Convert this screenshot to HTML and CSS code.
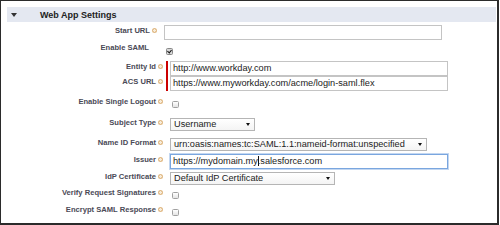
FILE: index.html
```
<!DOCTYPE html>
<html lang="en">

<head>
    <meta charset="UTF-8">
    <title>Web App Settings</title>
    <link rel="stylesheet" href="styles.css">
</head>

<body>
    <div class="frame">
        <div class="sec-head">
            <span class="twist"></span>
            <h3>Web App Settings</h3>
        </div>
        <ul class="form">
            <li class="row shift">
                <label>Start URL<i class="help"></i></label>
                <div class="field"><span class="input"></span></div>
            </li>
            <li class="row shift">
                <label class="nohelp">Enable SAML</label>
                <div class="field"><span class="check on"></span></div>
            </li>
            <li class="row">
                <label>Entity Id<i class="help"></i></label>
                <div class="field req"><span class="input">http://www.workday.com</span></div>
            </li>
            <li class="row">
                <label>ACS URL<i class="help"></i></label>
                <div class="field req"><span class="input">https://www.myworkday.com/acme/login-saml.flex</span></div>
            </li>
            <li class="row">
                <label>Enable Single Logout<i class="help"></i></label>
                <div class="field"><span class="check"></span></div>
            </li>
            <li class="row">
                <label>Subject Type<i class="help"></i></label>
                <div class="field"><span class="select s-user">Username<b></b></span></div>
            </li>
            <li class="row">
                <label>Name ID Format<i class="help"></i></label>
                <div class="field"><span class="select s-name">urn:oasis:names:tc:SAML:1.1:nameid-format:unspecified<b></b></span></div>
            </li>
            <li class="row">
                <label>Issuer<i class="help"></i></label>
                <div class="field"><span class="input focus">https://mydomain.my<em class="caret"></em>.salesforce.com</span></div>
            </li>
            <li class="row">
                <label>IdP Certificate<i class="help"></i></label>
                <div class="field"><span class="select s-cert">Default IdP Certificate<b></b></span></div>
            </li>
            <li class="row">
                <label>Verify Request Signatures<i class="help"></i></label>
                <div class="field"><span class="check"></span></div>
            </li>
            <li class="row">
                <label>Encrypt SAML Response<i class="help"></i></label>
                <div class="field"><span class="check"></span></div>
            </li>
        </ul>
    </div>
</body>

</html>
```

FILE: styles.css
```
* {
    margin: 0;
    padding: 0;
    box-sizing: border-box;
}

ul li {
    list-style: none;
}

body {
    background-color: #fff;
    font-family: "Liberation Sans", Arial, sans-serif;
}

.frame {
    width: 499px;
    height: 225px;
    padding-top: 6px;
    border: solid #2b2b2b;
    border-width: 1px 2px 2px 1px;
    overflow: hidden;
}

.sec-head {
    display: flex;
    align-items: center;
    height: 15px;
    margin: 0 1px 0 6px;
    padding-left: 4px;
    background-color: #e4e8f1;
}

.twist {
    width: 0;
    height: 0;
    margin-right: 23px;
    border-left: 3px solid transparent;
    border-right: 3px solid transparent;
    border-top: 4px solid #333;
}

.sec-head h3 {
    font-size: 9px;
    font-weight: bold;
    color: #222;
}

.form {
    display: grid;
    grid-template-rows: 17px 19px 15px 20px 21px 20px 17px 17px 16px 17px 16px;
    margin-top: 2px;
}

.row {
    display: flex;
    align-items: center;
    height: 16px;
}

.row.shift {
    margin-left: -6px;
}

.row label {
    flex: none;
    width: 162px;
    padding-bottom: 3px;
    text-align: right;
    font-size: 7.6px;
    font-weight: bold;
    color: #4a4a56;
    white-space: nowrap;
}

.row label.nohelp {
    padding-right: 8px;
}

.help {
    display: inline-block;
    width: 5px;
    height: 5px;
    margin-left: 2px;
    border-radius: 50%;
    background: radial-gradient(circle, #f8ecd9 0 1px, #e0b985 1.5px);
    vertical-align: 0;
}

.field {
    position: relative;
    display: flex;
    align-items: center;
    padding-left: 7px;
}

/* red required bar */
.field.req::before {
    content: "";
    position: absolute;
    left: 3px;
    top: 0;
    width: 2px;
    height: 100%;
    background-color: #c00;
}

.input {
    display: block;
    width: 278px;
    height: 15px;
    padding: 0 2px;
    border: 1px solid #c4c4c4;
    background-color: #fff;
    font-size: 9.2px;
    line-height: 13px;
    color: #222;
    white-space: nowrap;
    overflow: hidden;
}

.input.focus {
    border-color: #7aa6df;
    box-shadow: 0 0 0 1px rgba(122, 166, 223, .45);
}

.caret {
    display: inline-block;
    width: 1px;
    height: 10px;
    margin: 0 -1px 0 0;
    background-color: #111;
    vertical-align: -2px;
}

.select {
    display: flex;
    align-items: center;
    justify-content: space-between;
    height: 13px;
    padding: 0 4px 0 3px;
    border: 1px solid #b5b5b5;
    background: linear-gradient(#fff, #f4f4f4);
    font-size: 9.2px;
    color: #222;
    white-space: nowrap;
}

.select b {
    width: 0;
    height: 0;
    margin-left: 4px;
    border-left: 2px solid transparent;
    border-right: 2px solid transparent;
    border-top: 3px solid #111;
}

.s-user {
    width: 85px;
}

.s-name {
    width: 257px;
}

.s-cert {
    width: 165px;
}

.check {
    display: block;
    width: 7px;
    height: 7px;
    margin: 3px 0 0 2px;
    border: 1px solid #a0a0a0;
    border-radius: 1.5px;
    background: linear-gradient(#fff, #e4e4e4);
}

.check.on {
    margin-top: 5px;
    border-color: #888;
    background: #d8d8d8;
    position: relative;
}

.check.on::after {
    content: "";
    position: absolute;
    left: 1px;
    top: 0;
    width: 2px;
    height: 3px;
    border: solid #111;
    border-width: 0 1.5px 1.5px 0;
    transform: rotate(40deg);
}
```
